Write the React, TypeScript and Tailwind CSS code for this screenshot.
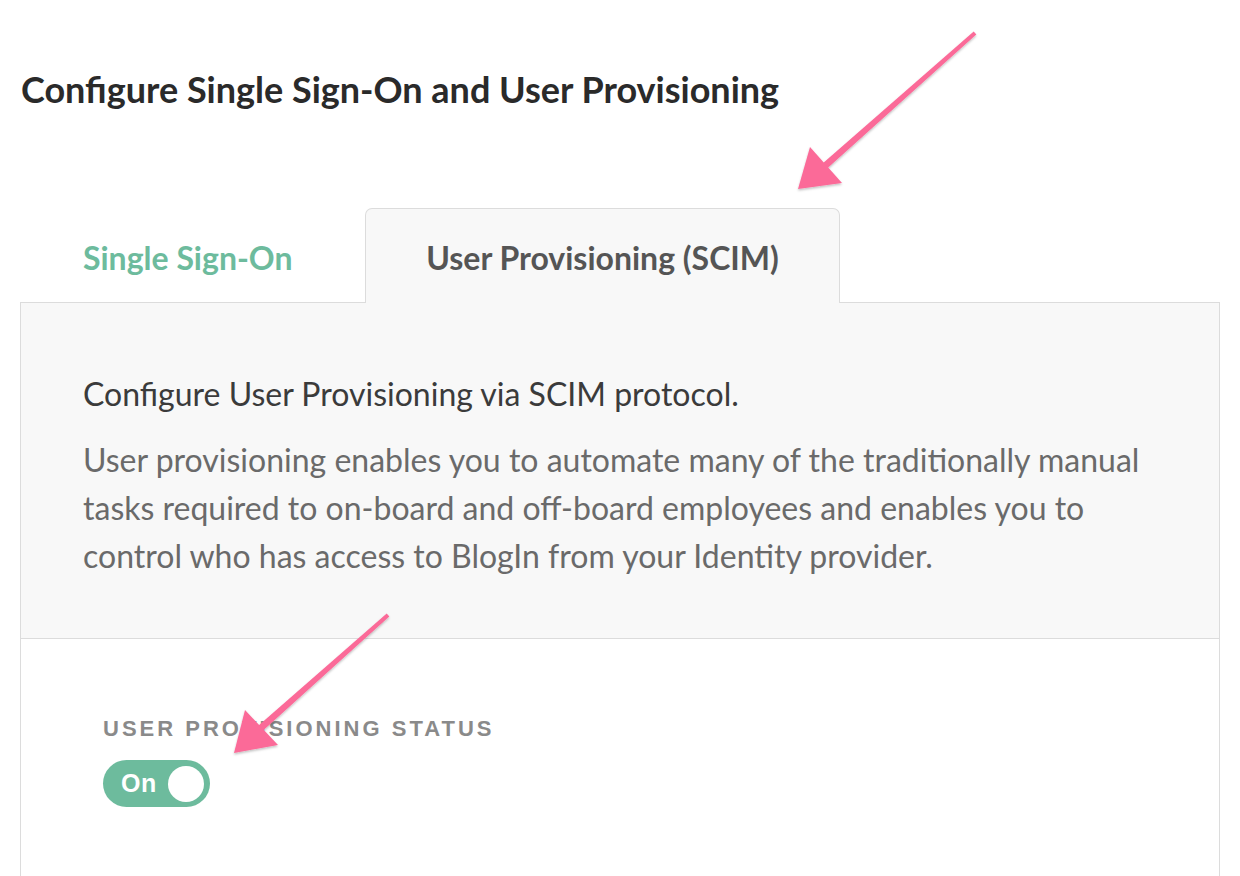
import React from "react";

const Arrows = () => (
    <svg
        className="absolute inset-0 pointer-events-none"
        width="1240"
        height="876"
        viewBox="0 0 1240 876"
    >
        <defs>
            <filter id="arrowShadow" x="-20%" y="-20%" width="140%" height="140%">
                <feDropShadow dx="0" dy="1.5" stdDeviation="1.2" floodColor="#000" floodOpacity="0.25" />
            </filter>
        </defs>
        <g fill="#fb6a98" filter="url(#arrowShadow)">
            <polygon points="973.7,31.5 976.3,34.5 824.3,171.1 819.7,165.9" />
            <polygon points="798,189 810,147 842,183" />
            <polygon points="386.7,613.5 389.3,616.5 260.3,733.1 255.7,727.9" />
            <polygon points="234,753 245,710 278,745" />
        </g>
    </svg>
);

const Toggle = () => (
    <div className="mt-[18px] flex h-[47px] w-[107px] items-center justify-between rounded-full bg-[#6dbb9d] pl-[18px] pr-[6px]">
        <span className="font-['Liberation_Sans',Arial,sans-serif] text-[25px] font-bold leading-none tracking-[0.5px] text-white">
            On
        </span>
        <span className="h-[36px] w-[36px] rounded-full bg-white" />
    </div>
);

export default function App() {
    return (
        <div className="relative h-[876px] w-[1240px] overflow-hidden bg-white font-[Lato,sans-serif]">
            <h1 className="pl-[21px] pt-[69px] text-[36px] font-bold leading-[40px] text-[#2a2a2a]">
                Configure Single Sign-On and User Provisioning
            </h1>

            <div className="mx-[20px] mt-[99px]">
                {/* tabs */}
                <div className="relative z-10 -mb-px flex h-[95px] text-[32px] leading-[48px]">
                    <div className="flex w-[345px] items-center pl-[63px] pt-[5px] font-bold text-[#6dbb9d]">
                        Single Sign-On
                    </div>
                    <div className="flex w-[475px] items-center justify-center rounded-t-[7px] border border-b-0 border-[#dcdcdc] bg-[#f8f8f8] pt-[4px] font-bold text-[#555]">
                        User Provisioning (SCIM)
                    </div>
                </div>

                <div className="w-[1200px] border border-[#dcdcdc]">
                    <div className="border-b border-[#dcdcdc] bg-[#f8f8f8] pb-[58px] pl-[62px] pr-[60px] pt-[67px] text-[32px] leading-[48px]">
                        <p className="text-[#3b3b3b]">Configure User Provisioning via SCIM protocol.</p>
                        <p className="mt-[18px] text-[#6a6a6a]">
                            User provisioning enables you to automate many of the traditionally manual tasks
                            required to on-board and off-board employees and enables you to control who has
                            access to BlogIn from your Identity provider.
                        </p>
                    </div>
                    <div className="h-[300px] pl-[82px] pt-[77px]">
                        <div className="font-['Liberation_Sans',Arial,sans-serif] text-[22px] font-bold uppercase leading-[26px] tracking-[3px] text-[#8a8a8a]">
                            User Provisioning Status
                        </div>
                        <Toggle />
                    </div>
                </div>
            </div>

            <Arrows />
        </div>
    );
}
